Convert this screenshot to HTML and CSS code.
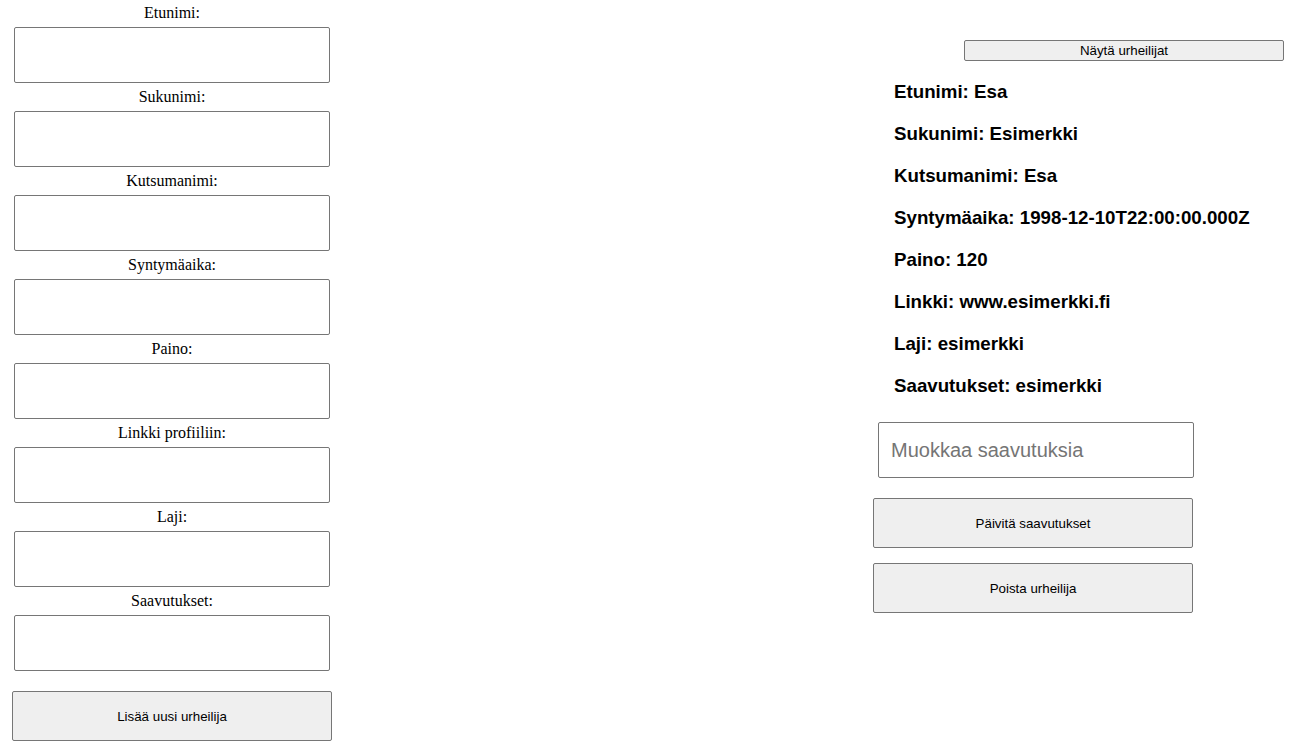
FILE: index.html
```html
<!DOCTYPE html>
<html lang="fi">
<head>
<meta charset="utf-8">
<title>Urheilijat</title>
<link rel="stylesheet" href="styles.css">
</head>
<body>
<main class="page">
  <form class="add-form">
    <label class="field-label">Etunimi:</label>
    <input class="field-input" type="text">
    <label class="field-label">Sukunimi:</label>
    <input class="field-input" type="text">
    <label class="field-label">Kutsumanimi:</label>
    <input class="field-input" type="text">
    <label class="field-label">Syntymäaika:</label>
    <input class="field-input" type="text">
    <label class="field-label">Paino:</label>
    <input class="field-input" type="text">
    <label class="field-label">Linkki profiiliin:</label>
    <input class="field-input" type="text">
    <label class="field-label">Laji:</label>
    <input class="field-input" type="text">
    <label class="field-label">Saavutukset:</label>
    <input class="field-input" type="text">
    <button class="big-btn add-btn" type="button">Lisää uusi urheilija</button>
  </form>
  <section class="athletes">
    <button class="show-btn" type="button">Näytä urheilijat</button>
    <div class="details">
      <h3 class="detail">Etunimi: Esa</h3>
      <h3 class="detail">Sukunimi: Esimerkki</h3>
      <h3 class="detail">Kutsumanimi: Esa</h3>
      <h3 class="detail">Syntymäaika: 1998-12-10T22:00:00.000Z</h3>
      <h3 class="detail">Paino: 120</h3>
      <h3 class="detail">Linkki: www.esimerkki.fi</h3>
      <h3 class="detail">Laji: esimerkki</h3>
      <h3 class="detail">Saavutukset: esimerkki</h3>
    </div>
    <input class="edit-input" type="text" placeholder="Muokkaa saavutuksia">
    <button class="big-btn" type="button">Päivitä saavutukset</button>
    <button class="big-btn" type="button">Poista urheilija</button>
  </section>
</main>
</body>
</html>
```
FILE: styles.css
```css
html, body {
  margin: 0;
  padding: 0;
  background: #ffffff;
}

body {
  font-family: "Liberation Serif", "Times New Roman", serif;
  font-size: 16px;
  color: #000;
}

.page {
  display: flex;
  align-items: flex-start;
}

.add-form {
  margin-left: 12px;
  width: 320px;
  display: flex;
  flex-direction: column;
  align-items: center;
  padding-top: 3px;
}

.field-label {
  display: block;
  line-height: 20px;
  height: 20px;
  text-align: center;
}

.field-input {
  box-sizing: border-box;
  width: 316px;
  height: 56px;
  margin: 4px 0;
  border: 1px solid #767676;
  border-radius: 2px;
  padding: 0 12px;
  font-family: "Liberation Sans", Arial, sans-serif;
  font-size: 20px;
  background: #fff;
}

.big-btn {
  box-sizing: border-box;
  width: 320px;
  height: 50px;
  border: 1px solid #767676;
  border-radius: 2px;
  background: #efefef;
  font-family: "Liberation Sans", Arial, sans-serif;
  font-size: 13.333px;
  color: #000;
  padding: 0;
}

.add-btn {
  margin-top: 16px;
}

.athletes {
  margin-left: auto;
  margin-right: 15px;
  width: 411px;
  display: flex;
  flex-direction: column;
  align-items: flex-start;
  padding-top: 40px;
}

.show-btn {
  align-self: flex-end;
  box-sizing: border-box;
  width: 320px;
  height: 21px;
  border: 1px solid #767676;
  border-radius: 2px;
  background: #efefef;
  font-family: "Liberation Sans", Arial, sans-serif;
  font-size: 13.333px;
  color: #000;
  padding: 0;
}

.details {
  padding-left: 21px;
  padding-top: 20px;
  display: flex;
  flex-direction: column;
  gap: 20px;
}

.detail {
  margin: 0;
  font-family: "Liberation Sans", Arial, sans-serif;
  font-size: 18.72px;
  font-weight: bold;
  line-height: 22px;
}

.edit-input {
  box-sizing: border-box;
  width: 316px;
  height: 56px;
  margin: 25px 0 0 5px;
  border: 1px solid #767676;
  border-radius: 2px;
  padding: 0 12px;
  font-family: "Liberation Sans", Arial, sans-serif;
  font-size: 20px;
  background: #fff;
}

.edit-input::placeholder {
  color: #757575;
}

.athletes .big-btn {
  margin-top: 20px;
}

.athletes .big-btn + .big-btn {
  margin-top: 15px;
}
```
